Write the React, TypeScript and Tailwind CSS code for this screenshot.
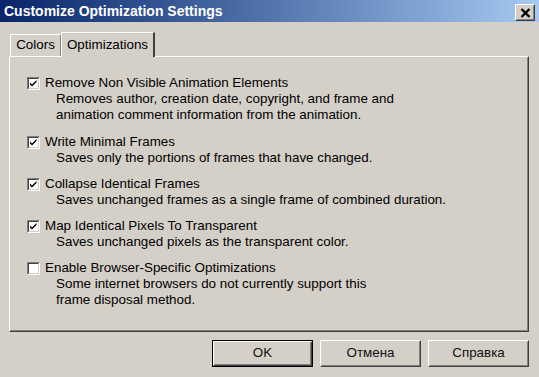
import React from "react";

const font = { fontFamily: '"Liberation Sans", Arial, sans-serif' };

type Opt = { label: string; lines: string[]; checked: boolean };

const OPTIONS: Opt[] = [
  {
    label: "Remove Non Visible Animation Elements",
    lines: [
      "Removes author, creation date, copyright, and frame and",
      "animation comment information from the animation.",
    ],
    checked: true,
  },
  {
    label: "Write Minimal Frames",
    lines: ["Saves only the portions of frames that have changed."],
    checked: true,
  },
  {
    label: "Collapse Identical Frames",
    lines: ["Saves unchanged frames as a single frame of combined duration."],
    checked: true,
  },
  {
    label: "Map Identical Pixels To Transparent",
    lines: ["Saves unchanged pixels as the transparent color."],
    checked: true,
  },
  {
    label: "Enable Browser-Specific Optimizations",
    lines: [
      "Some internet browsers do not currently support this",
      "frame disposal method.",
    ],
    checked: false,
  },
];

function CheckBox({ checked }: { checked: boolean }) {
  return (
    <span className="block h-[13px] w-[13px] shrink-0 border border-t-[#808080] border-l-[#808080] border-r-white border-b-white">
      <span className="block h-full w-full border border-t-[#404040] border-l-[#404040] border-r-[#d4d0c8] border-b-[#d4d0c8] bg-white">
        {checked && (
          <svg width="9" height="9" viewBox="0 0 9 9" className="block">
            <path d="M1 3.5 L3 5.5 L7.5 1 V3 L3 7.5 L1 5.5 Z" fill="#000" />
          </svg>
        )}
      </span>
    </span>
  );
}

function Button({ children, def }: { children: React.ReactNode; def?: boolean }) {
  return (
    <div className={`h-[27px] w-[101px] ${def ? "border border-black" : ""}`}>
      <div className="h-full w-full border border-t-white border-l-white border-r-[#404040] border-b-[#404040]">
        <div className="flex h-full w-full items-center justify-center border border-transparent border-r-[#808080] border-b-[#808080] text-[13.4px] text-[#111]">
          {children}
        </div>
      </div>
    </div>
  );
}

export default function App() {
  return (
    <div className="h-[377px] w-[539px] overflow-hidden bg-[#d4d0c8]" style={font}>
      {/* title bar */}
      <div className="flex h-[22px] items-center justify-between bg-gradient-to-r from-[#0a246a] to-[#a6caf0] pl-[4px] pr-[4px]">
        <span className="text-[14px] font-bold text-white leading-none">
          Customize Optimization Settings
        </span>
        <div className="mt-[3px] h-[17px] w-[20px] border border-t-white border-l-white border-r-[#404040] border-b-[#404040] bg-[#d4d0c8]">
          <div className="flex h-full w-full items-center justify-center border border-transparent border-r-[#808080] border-b-[#808080]">
            <svg width="11" height="10" viewBox="0 0 11 10">
              <path d="M1.5 1 L9.5 9 M9.5 1 L1.5 9" stroke="#000" strokeWidth="2.4" />
            </svg>
          </div>
        </div>
      </div>

      <div className="pl-[9px] pr-[10px] pt-[10px]">
        {/* tabs */}
        <div className="flex items-end">
          <div className="ml-[1px] flex h-[22px] w-[51px] items-center justify-center border-l border-t border-white border-r border-r-[#808080] text-[13.4px] text-black">
            Colors
          </div>
          <div className="relative z-10 -mb-px flex h-[25px] w-[94px] items-start justify-center border-l border-t border-white border-r-2 border-r-[#404040] bg-[#d4d0c8] pt-[2px] text-[13.4px] text-black">
            Optimizations
          </div>
        </div>
        {/* panel */}
        <div className="h-[276px] border border-t-white border-l-white border-r-[#404040] border-b-[#404040]">
          <div className="h-full border border-transparent border-r-[#808080] border-b-[#808080] pl-[16px] pt-[17px]">
            <div className="flex flex-col gap-[10px] text-[13.4px] leading-[16px] text-black">
              {OPTIONS.map((o, i) => (
                <div key={o.label} className={i === 0 ? "mb-[1px]" : ""}>
                  <div className="flex items-center gap-[5px]">
                    <CheckBox checked={o.checked} />
                    <span>{o.label}</span>
                  </div>
                  <div className="pl-[29px]">
                    {o.lines.map((l) => (
                      <div key={l}>{l}</div>
                    ))}
                  </div>
                </div>
              ))}
            </div>
          </div>
        </div>
        {/* buttons */}
        <div className="mt-[8px] flex justify-end gap-[7px]">
          <Button def>OK</Button>
          <Button>Отмена</Button>
          <Button>Справка</Button>
        </div>
      </div>
    </div>
  );
}
